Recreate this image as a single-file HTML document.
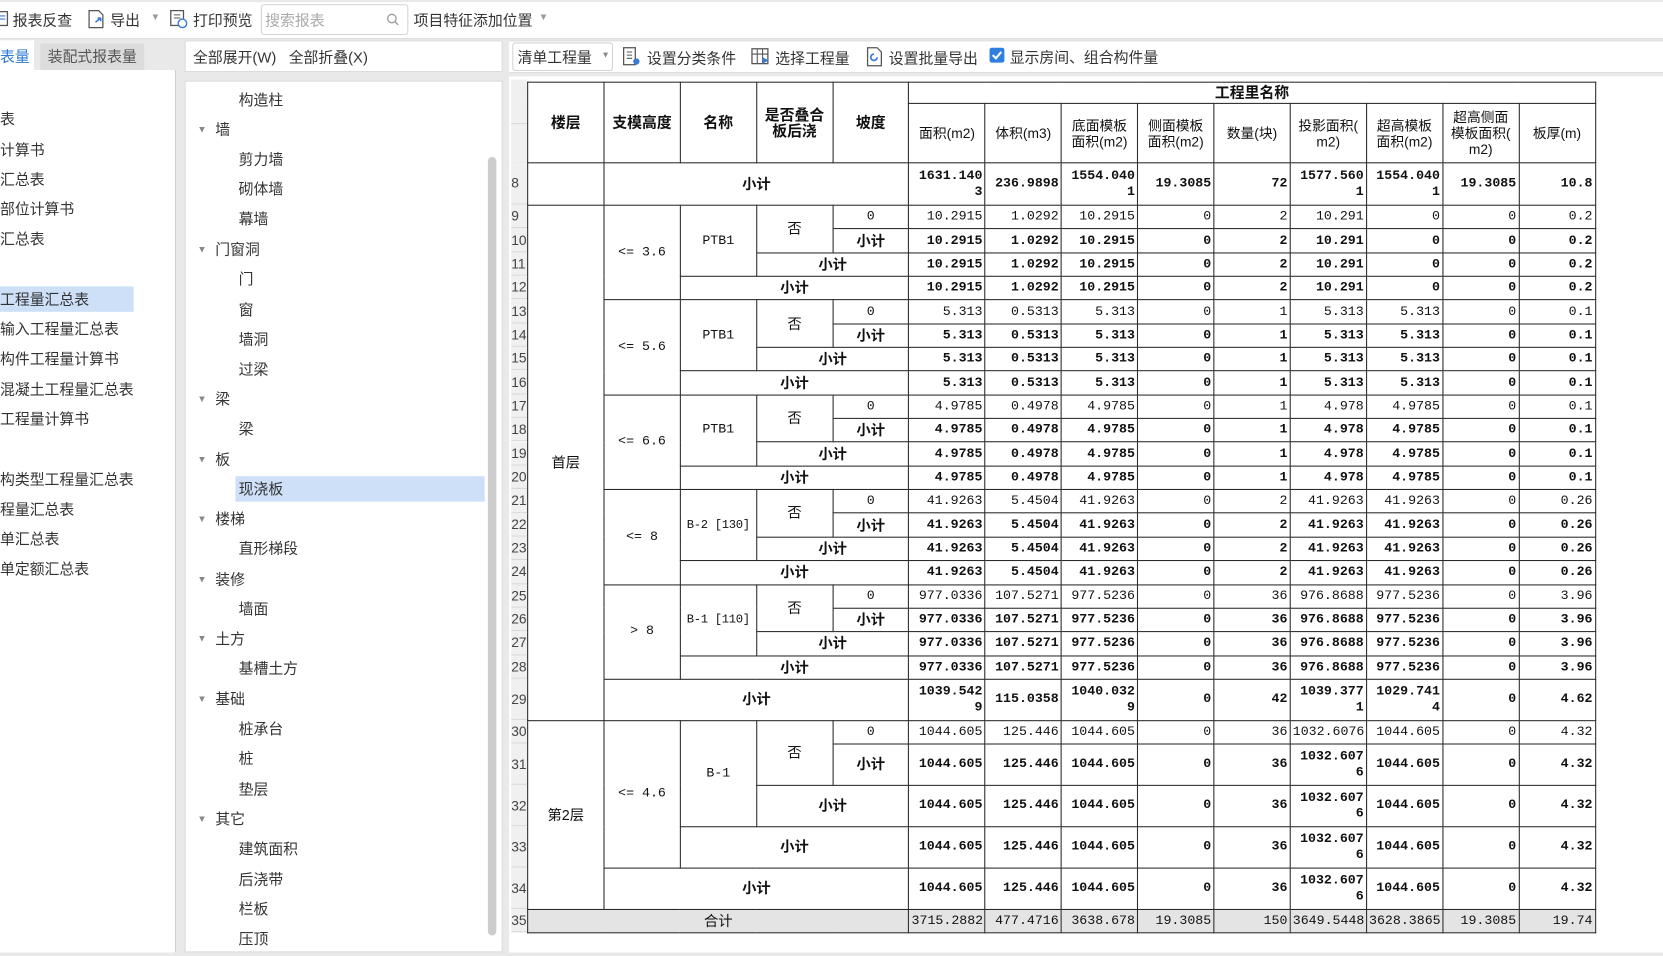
<!DOCTYPE html>
<html><head><meta charset="utf-8">
<style>
html,body{margin:0;padding:0;width:1663px;height:956px;overflow:hidden;background:#e9e9e9;}
#root{position:absolute;left:0;top:0;width:1568px;height:901px;transform:scale(1.0606);transform-origin:0 0;font-family:"Liberation Sans","Noto Sans CJK SC",sans-serif;font-size:14px;color:#333;background:#e9e9e9;}
.a{position:absolute;white-space:nowrap;}
.tb{position:absolute;left:0;top:2px;width:1568px;height:34px;background:#fff;border-bottom:1px solid #d6d6d6;}
.panel{position:absolute;background:#fff;}
.li{position:absolute;left:0;font-size:14px;color:#333;line-height:20px;}
.tr{position:absolute;font-size:14px;color:#333;line-height:20px;}
.arr{position:absolute;left:186px;font-size:9px;color:#888;}
table.g{position:absolute;left:497px;top:77px;width:1007px;border-collapse:collapse;table-layout:fixed;font-family:"Liberation Mono","Noto Serif CJK SC",monospace;font-size:12.5px;color:#111;background:#fff;}
table.g td{border:1px solid #2a2a2a;padding:0 2px;text-align:right;vertical-align:middle;line-height:15px;overflow:hidden;}
table.g td.c{text-align:center;white-space:nowrap;}
table.g td.nm{font-size:11.5px;padding:0;letter-spacing:-0.3px;}
table.g .b{font-weight:bold;}
table.g .h{text-align:center;font-family:"Liberation Sans","Noto Sans CJK SC",sans-serif;font-size:13px;line-height:15px;}
table.g .hb{font-weight:bold;font-size:14px;}
table.g td.cn{font-family:"Liberation Sans","Noto Sans CJK SC",sans-serif;text-align:center;font-size:13.5px;}
.rn{position:absolute;left:482px;width:15px;font-size:13px;color:#444;background:#f0f0f0;border-bottom:1px solid #d8d8d8;box-sizing:border-box;display:flex;align-items:center;}
</style></head><body><div id="root">

<div class="tb"></div>
<svg class="a" style="left:0;top:9px" width="10" height="18"><rect x="-4" y="2" width="11" height="13" fill="none" stroke="#555" stroke-width="1.2"/><path d="M0 6h5M0 9h5" stroke="#3a7bd5"/></svg>
<div class="a" style="left:12px;top:9px">报表反查</div>
<svg class="a" style="left:81px;top:8px" width="20" height="20"><path d="M3 2h9l4 4v12H3z" fill="none" stroke="#555" stroke-width="1.2"/><path d="M9 13l5-4m0 0h-3m3 0v3" stroke="#3a7bd5" stroke-width="1.5" fill="none"/></svg>
<div class="a" style="left:104px;top:9px">导出</div>
<div class="a" style="left:142px;top:11px;font-size:9px;color:#999">▼</div>
<svg class="a" style="left:158px;top:8px" width="20" height="20"><rect x="3" y="2" width="12" height="14" fill="none" stroke="#555" stroke-width="1.2"/><path d="M6 6h6M6 9h6" stroke="#555"/><circle cx="14" cy="14" r="4" fill="#fff" stroke="#3a7bd5" stroke-width="1.3"/></svg>
<div class="a" style="left:182px;top:9px">打印预览</div>
<div class="a" style="left:246px;top:4px;width:137px;height:27px;border:1px solid #d4d4d4;border-radius:3px;background:#fff"></div>
<div class="a" style="left:250px;top:9px;color:#aaa">搜索报表</div>
<svg class="a" style="left:364px;top:12px" width="13" height="13"><circle cx="5.5" cy="5.5" r="4" fill="none" stroke="#999" stroke-width="1.2"/><path d="M8.5 8.5l3 3" stroke="#999" stroke-width="1.2"/></svg>
<div class="a" style="left:390px;top:9px">项目特征添加位置</div>
<div class="a" style="left:508px;top:11px;font-size:9px;color:#999">▼</div>

<div class="panel" style="left:0;top:38px;width:166px;height:30px;background:#e9e9e9"></div>
<div class="a" style="left:0;top:38px;width:32px;height:30px;background:#fff"></div>
<div class="a" style="left:0;top:43px;color:#2d7ad6">表量</div>
<div class="a" style="left:38px;top:41px;width:98px;height:25px;background:#dcdcdc"></div>
<div class="a" style="left:45px;top:43px;color:#555">装配式报表量</div>
<div class="panel" style="left:0;top:66px;width:165px;height:832px;border-right:1px solid #cfcfcf"></div>
<div class="a" style="left:0;top:270px;width:126px;height:24px;background:#cde0f8"></div>
<div class="li" style="top:102px">表</div>
<div class="li" style="top:131px">计算书</div>
<div class="li" style="top:159px">汇总表</div>
<div class="li" style="top:187px">部位计算书</div>
<div class="li" style="top:215px">汇总表</div>
<div class="li" style="top:272px">工程量汇总表</div>
<div class="li" style="top:300px">输入工程量汇总表</div>
<div class="li" style="top:328px">构件工程量计算书</div>
<div class="li" style="top:357px">混凝土工程量汇总表</div>
<div class="li" style="top:385px">工程量计算书</div>
<div class="li" style="top:442px">构类型工程量汇总表</div>
<div class="li" style="top:470px">程量汇总表</div>
<div class="li" style="top:498px">单汇总表</div>
<div class="li" style="top:526px">单定额汇总表</div>

<div class="panel" style="left:174px;top:38px;width:300px;height:30px;border:1px solid #dadada;box-sizing:border-box"></div>
<div class="a" style="left:182px;top:44px">全部展开(W)&nbsp;&nbsp; 全部折叠(X)</div>
<div class="panel" style="left:174px;top:76px;width:300px;height:822px;border:1px solid #dadada;box-sizing:border-box"></div>
<div class="a" style="left:460px;top:148px;width:8px;height:734px;background:#cdcdcd;border-radius:4px"></div>
<div class="a" style="left:222px;top:449px;width:235px;height:24px;background:#cde0f8"></div>
<div class="tr" style="left:225px;top:84px">构造柱</div>
<div class="arr" style="top:117px">▼</div><div class="tr" style="left:203px;top:112px">墙</div>
<div class="tr" style="left:225px;top:140px">剪力墙</div>
<div class="tr" style="left:225px;top:168px">砌体墙</div>
<div class="tr" style="left:225px;top:196px">幕墙</div>
<div class="arr" style="top:230px">▼</div><div class="tr" style="left:203px;top:225px">门窗洞</div>
<div class="tr" style="left:225px;top:253px">门</div>
<div class="tr" style="left:225px;top:282px">窗</div>
<div class="tr" style="left:225px;top:310px">墙洞</div>
<div class="tr" style="left:225px;top:338px">过梁</div>
<div class="arr" style="top:371px">▼</div><div class="tr" style="left:203px;top:366px">梁</div>
<div class="tr" style="left:225px;top:394px">梁</div>
<div class="arr" style="top:428px">▼</div><div class="tr" style="left:203px;top:423px">板</div>
<div class="tr" style="left:225px;top:451px">现浇板</div>
<div class="arr" style="top:484px">▼</div><div class="tr" style="left:203px;top:479px">楼梯</div>
<div class="tr" style="left:225px;top:507px">直形梯段</div>
<div class="arr" style="top:541px">▼</div><div class="tr" style="left:203px;top:536px">装修</div>
<div class="tr" style="left:225px;top:564px">墙面</div>
<div class="arr" style="top:597px">▼</div><div class="tr" style="left:203px;top:592px">土方</div>
<div class="tr" style="left:225px;top:620px">基槽土方</div>
<div class="arr" style="top:654px">▼</div><div class="tr" style="left:203px;top:649px">基础</div>
<div class="tr" style="left:225px;top:677px">桩承台</div>
<div class="tr" style="left:225px;top:705px">桩</div>
<div class="tr" style="left:225px;top:734px">垫层</div>
<div class="arr" style="top:767px">▼</div><div class="tr" style="left:203px;top:762px">其它</div>
<div class="tr" style="left:225px;top:790px">建筑面积</div>
<div class="tr" style="left:225px;top:819px">后浇带</div>
<div class="tr" style="left:225px;top:847px">栏板</div>
<div class="tr" style="left:225px;top:875px">压顶</div>

<div class="panel" style="left:480px;top:38px;width:1088px;height:31px;border-top:1px solid #dadada;border-bottom:1px solid #dadada;box-sizing:border-box"></div>
<div class="a" style="left:483px;top:40px;width:95px;height:27px;border:1px solid #d4d4d4;border-radius:3px;background:#fff;box-sizing:border-box"></div>
<div class="a" style="left:488px;top:44px">清单工程量</div>
<div class="a" style="left:567px;top:47px;font-size:8px;color:#888">▼</div>
<svg class="a" style="left:586px;top:44px" width="20" height="20"><rect x="2" y="1" width="11" height="16" fill="none" stroke="#555" stroke-width="1.2"/><path d="M5 5h5M5 8h5M5 11h5" stroke="#555"/><circle cx="14" cy="14" r="3" fill="#3a7bd5"/></svg>
<div class="a" style="left:610px;top:45px">设置分类条件</div>
<svg class="a" style="left:708px;top:44px" width="20" height="20"><rect x="1" y="2" width="15" height="14" fill="none" stroke="#555" stroke-width="1.2"/><path d="M1 7h15M6 2v14M11 2v14" stroke="#555"/><path d="M11 10l6 3-6 3z" fill="#3a7bd5"/></svg>
<div class="a" style="left:731px;top:45px">选择工程量</div>
<svg class="a" style="left:815px;top:44px" width="20" height="20"><path d="M3 1h9l4 4v13H3z" fill="none" stroke="#555" stroke-width="1.2"/><path d="M12 10a3 3 0 1 1-3-3" stroke="#3a7bd5" stroke-width="1.6" fill="none"/></svg>
<div class="a" style="left:838px;top:45px">设置批量导出</div>
<div class="a" style="left:933px;top:45px;width:14px;height:14px;background:#2f7fe0;border-radius:2px"></div>
<svg class="a" style="left:933px;top:45px" width="14" height="14"><path d="M3 7l3 3 5-6" stroke="#fff" stroke-width="2" fill="none"/></svg>
<div class="a" style="left:952px;top:44px">显示房间、组合构件量</div>
<div class="panel" style="left:480px;top:72px;width:1088px;height:826px"></div>
<div class="a" style="left:482px;top:75px;width:15px;height:78px;background:#f0f0f0;border-bottom:1px solid #d8d8d8"></div>
<div class="a" style="left:482px;top:116px;width:15px;height:1px;background:#d8d8d8"></div>

<div class="rn" style="top:153px;height:40px">8</div>
<div class="rn" style="top:193px;height:22.35px">9</div>
<div class="rn" style="top:215.35px;height:22.35px">10</div>
<div class="rn" style="top:237.7px;height:22.35px">11</div>
<div class="rn" style="top:260.05px;height:22.35px">12</div>
<div class="rn" style="top:282.4px;height:22.35px">13</div>
<div class="rn" style="top:304.75px;height:22.35px">14</div>
<div class="rn" style="top:327.1px;height:22.35px">15</div>
<div class="rn" style="top:349.45px;height:22.35px">16</div>
<div class="rn" style="top:371.8px;height:22.35px">17</div>
<div class="rn" style="top:394.15px;height:22.35px">18</div>
<div class="rn" style="top:416.5px;height:22.35px">19</div>
<div class="rn" style="top:438.85px;height:22.35px">20</div>
<div class="rn" style="top:461.2px;height:22.35px">21</div>
<div class="rn" style="top:483.55px;height:22.35px">22</div>
<div class="rn" style="top:505.9px;height:22.35px">23</div>
<div class="rn" style="top:528.25px;height:22.35px">24</div>
<div class="rn" style="top:550.6px;height:22.35px">25</div>
<div class="rn" style="top:572.95px;height:22.35px">26</div>
<div class="rn" style="top:595.3px;height:22.35px">27</div>
<div class="rn" style="top:617.65px;height:22.35px">28</div>
<div class="rn" style="top:640px;height:39px">29</div>
<div class="rn" style="top:679px;height:22px">30</div>
<div class="rn" style="top:701px;height:39px">31</div>
<div class="rn" style="top:740px;height:39px">32</div>
<div class="rn" style="top:779px;height:39px">33</div>
<div class="rn" style="top:818px;height:39px">34</div>
<div class="rn" style="top:857px;height:22px">35</div>

<table class="g">
<colgroup><col span="14" style="width:71.9px"></colgroup>
<tr style="height:20px"><td class="h hb" rowspan="2">楼层</td><td class="h hb" rowspan="2">支模高度</td><td class="h hb" rowspan="2">名称</td><td class="h hb" rowspan="2">是否叠合<br>板后浇</td><td class="h hb" rowspan="2">坡度</td><td class="h hb" colspan="9">工程里名称</td></tr>
<tr style="height:56px"><td class="h">面积(m2)</td><td class="h">体积(m3)</td><td class="h">底面模板<br>面积(m2)</td><td class="h">侧面模板<br>面积(m2)</td><td class="h">数量(块)</td><td class="h">投影面积(<br>m2)</td><td class="h">超高模板<br>面积(m2)</td><td class="h">超高侧面<br>模板面积(<br>m2)</td><td class="h">板厚(m)</td></tr>
<tr class="b" style="height:40px"><td></td><td class="cn" colspan="4">小计</td><td>1631.140<br>3</td><td>236.9898</td><td>1554.040<br>1</td><td>19.3085</td><td>72</td><td>1577.560<br>1</td><td>1554.040<br>1</td><td>19.3085</td><td>10.8</td></tr>

<tr style="height:22.35px"><td class="cn" rowspan="21">首层</td><td class="c" rowspan="4">&lt;= 3.6</td><td class="c" rowspan="3">PTB1</td><td class="cn" rowspan="2">否</td><td class="c">0</td><td>10.2915</td><td>1.0292</td><td>10.2915</td><td>0</td><td>2</td><td>10.291</td><td>0</td><td>0</td><td>0.2</td></tr>
<tr class="b" style="height:22.35px"><td class="cn">小计</td><td>10.2915</td><td>1.0292</td><td>10.2915</td><td>0</td><td>2</td><td>10.291</td><td>0</td><td>0</td><td>0.2</td></tr>
<tr class="b" style="height:22.35px"><td class="cn" colspan="2">小计</td><td>10.2915</td><td>1.0292</td><td>10.2915</td><td>0</td><td>2</td><td>10.291</td><td>0</td><td>0</td><td>0.2</td></tr>
<tr class="b" style="height:22.35px"><td class="cn" colspan="3">小计</td><td>10.2915</td><td>1.0292</td><td>10.2915</td><td>0</td><td>2</td><td>10.291</td><td>0</td><td>0</td><td>0.2</td></tr>

<tr style="height:22.35px"><td class="c" rowspan="4">&lt;= 5.6</td><td class="c" rowspan="3">PTB1</td><td class="cn" rowspan="2">否</td><td class="c">0</td><td>5.313</td><td>0.5313</td><td>5.313</td><td>0</td><td>1</td><td>5.313</td><td>5.313</td><td>0</td><td>0.1</td></tr>
<tr class="b" style="height:22.35px"><td class="cn">小计</td><td>5.313</td><td>0.5313</td><td>5.313</td><td>0</td><td>1</td><td>5.313</td><td>5.313</td><td>0</td><td>0.1</td></tr>
<tr class="b" style="height:22.35px"><td class="cn" colspan="2">小计</td><td>5.313</td><td>0.5313</td><td>5.313</td><td>0</td><td>1</td><td>5.313</td><td>5.313</td><td>0</td><td>0.1</td></tr>
<tr class="b" style="height:22.35px"><td class="cn" colspan="3">小计</td><td>5.313</td><td>0.5313</td><td>5.313</td><td>0</td><td>1</td><td>5.313</td><td>5.313</td><td>0</td><td>0.1</td></tr>

<tr style="height:22.35px"><td class="c" rowspan="4">&lt;= 6.6</td><td class="c" rowspan="3">PTB1</td><td class="cn" rowspan="2">否</td><td class="c">0</td><td>4.9785</td><td>0.4978</td><td>4.9785</td><td>0</td><td>1</td><td>4.978</td><td>4.9785</td><td>0</td><td>0.1</td></tr>
<tr class="b" style="height:22.35px"><td class="cn">小计</td><td>4.9785</td><td>0.4978</td><td>4.9785</td><td>0</td><td>1</td><td>4.978</td><td>4.9785</td><td>0</td><td>0.1</td></tr>
<tr class="b" style="height:22.35px"><td class="cn" colspan="2">小计</td><td>4.9785</td><td>0.4978</td><td>4.9785</td><td>0</td><td>1</td><td>4.978</td><td>4.9785</td><td>0</td><td>0.1</td></tr>
<tr class="b" style="height:22.35px"><td class="cn" colspan="3">小计</td><td>4.9785</td><td>0.4978</td><td>4.9785</td><td>0</td><td>1</td><td>4.978</td><td>4.9785</td><td>0</td><td>0.1</td></tr>

<tr style="height:22.35px"><td class="c" rowspan="4">&lt;= 8</td><td class="c nm" rowspan="3">B-2 [130]</td><td class="cn" rowspan="2">否</td><td class="c">0</td><td>41.9263</td><td>5.4504</td><td>41.9263</td><td>0</td><td>2</td><td>41.9263</td><td>41.9263</td><td>0</td><td>0.26</td></tr>
<tr class="b" style="height:22.35px"><td class="cn">小计</td><td>41.9263</td><td>5.4504</td><td>41.9263</td><td>0</td><td>2</td><td>41.9263</td><td>41.9263</td><td>0</td><td>0.26</td></tr>
<tr class="b" style="height:22.35px"><td class="cn" colspan="2">小计</td><td>41.9263</td><td>5.4504</td><td>41.9263</td><td>0</td><td>2</td><td>41.9263</td><td>41.9263</td><td>0</td><td>0.26</td></tr>
<tr class="b" style="height:22.35px"><td class="cn" colspan="3">小计</td><td>41.9263</td><td>5.4504</td><td>41.9263</td><td>0</td><td>2</td><td>41.9263</td><td>41.9263</td><td>0</td><td>0.26</td></tr>

<tr style="height:22.35px"><td class="c" rowspan="4">&gt; 8</td><td class="c nm" rowspan="3">B-1 [110]</td><td class="cn" rowspan="2">否</td><td class="c">0</td><td>977.0336</td><td>107.5271</td><td>977.5236</td><td>0</td><td>36</td><td>976.8688</td><td>977.5236</td><td>0</td><td>3.96</td></tr>
<tr class="b" style="height:22.35px"><td class="cn">小计</td><td>977.0336</td><td>107.5271</td><td>977.5236</td><td>0</td><td>36</td><td>976.8688</td><td>977.5236</td><td>0</td><td>3.96</td></tr>
<tr class="b" style="height:22.35px"><td class="cn" colspan="2">小计</td><td>977.0336</td><td>107.5271</td><td>977.5236</td><td>0</td><td>36</td><td>976.8688</td><td>977.5236</td><td>0</td><td>3.96</td></tr>
<tr class="b" style="height:22.35px"><td class="cn" colspan="3">小计</td><td>977.0336</td><td>107.5271</td><td>977.5236</td><td>0</td><td>36</td><td>976.8688</td><td>977.5236</td><td>0</td><td>3.96</td></tr>

<tr class="b" style="height:39px"><td class="cn" colspan="4">小计</td><td>1039.542<br>9</td><td>115.0358</td><td>1040.032<br>9</td><td>0</td><td>42</td><td>1039.377<br>1</td><td>1029.741<br>4</td><td>0</td><td>4.62</td></tr>

<tr style="height:22px"><td class="cn" rowspan="5">第2层</td><td class="c" rowspan="4">&lt;= 4.6</td><td class="c" rowspan="3">B-1</td><td class="cn" rowspan="2">否</td><td class="c">0</td><td>1044.605</td><td>125.446</td><td>1044.605</td><td>0</td><td>36</td><td>1032.6076</td><td>1044.605</td><td>0</td><td>4.32</td></tr>
<tr class="b" style="height:39px"><td class="cn">小计</td><td>1044.605</td><td>125.446</td><td>1044.605</td><td>0</td><td>36</td><td>1032.607<br>6</td><td>1044.605</td><td>0</td><td>4.32</td></tr>
<tr class="b" style="height:39px"><td class="cn" colspan="2">小计</td><td>1044.605</td><td>125.446</td><td>1044.605</td><td>0</td><td>36</td><td>1032.607<br>6</td><td>1044.605</td><td>0</td><td>4.32</td></tr>
<tr class="b" style="height:39px"><td class="cn" colspan="3">小计</td><td>1044.605</td><td>125.446</td><td>1044.605</td><td>0</td><td>36</td><td>1032.607<br>6</td><td>1044.605</td><td>0</td><td>4.32</td></tr>
<tr class="b" style="height:39px"><td class="cn" colspan="4">小计</td><td>1044.605</td><td>125.446</td><td>1044.605</td><td>0</td><td>36</td><td>1032.607<br>6</td><td>1044.605</td><td>0</td><td>4.32</td></tr>

<tr style="height:22px;background:#e4e4e4"><td class="cn" colspan="5" style="font-weight:normal">合计</td><td>3715.2882</td><td>477.4716</td><td>3638.678</td><td>19.3085</td><td>150</td><td>3649.5448</td><td>3628.3865</td><td>19.3085</td><td>19.74</td></tr>
</table>
</div></body></html>
